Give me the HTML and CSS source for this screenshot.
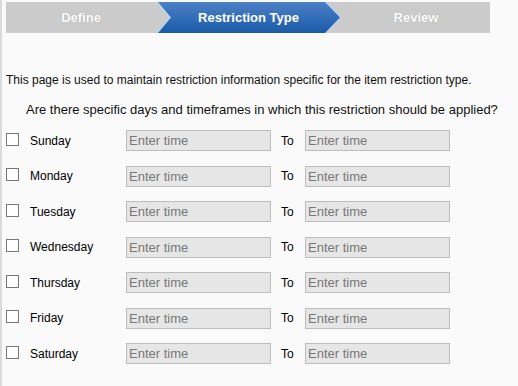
FILE: index.html
```html
<!DOCTYPE html>
<html lang="en">
<head>
    <meta charset="UTF-8">
    <title>Restriction Type</title>
    <link rel="stylesheet" href="styles.css">
</head>
<body>
    <div class="page">
        <div class="wizard">
            <div class="step">Define</div>
            <div class="step step-active"><div class="step-fill">Restriction Type</div></div>
            <div class="step">Review</div>
        </div>

        <p class="intro">This page is used to maintain restriction information specific for the item restriction type.</p>
        <p class="question">Are there specific days and timeframes in which this restriction should be applied?</p>

        <div class="days">
            <div class="day">
                <input type="checkbox" class="day-check" id="d1"><label class="day-name" for="d1">Sunday</label>
                <input type="text" class="time" placeholder="Enter time"><span class="to">To</span><input type="text" class="time" placeholder="Enter time">
            </div>
            <div class="day">
                <input type="checkbox" class="day-check" id="d2"><label class="day-name" for="d2">Monday</label>
                <input type="text" class="time" placeholder="Enter time"><span class="to">To</span><input type="text" class="time" placeholder="Enter time">
            </div>
            <div class="day">
                <input type="checkbox" class="day-check" id="d3"><label class="day-name" for="d3">Tuesday</label>
                <input type="text" class="time" placeholder="Enter time"><span class="to">To</span><input type="text" class="time" placeholder="Enter time">
            </div>
            <div class="day">
                <input type="checkbox" class="day-check" id="d4"><label class="day-name" for="d4">Wednesday</label>
                <input type="text" class="time" placeholder="Enter time"><span class="to">To</span><input type="text" class="time" placeholder="Enter time">
            </div>
            <div class="day">
                <input type="checkbox" class="day-check" id="d5"><label class="day-name" for="d5">Thursday</label>
                <input type="text" class="time" placeholder="Enter time"><span class="to">To</span><input type="text" class="time" placeholder="Enter time">
            </div>
            <div class="day">
                <input type="checkbox" class="day-check" id="d6"><label class="day-name" for="d6">Friday</label>
                <input type="text" class="time" placeholder="Enter time"><span class="to">To</span><input type="text" class="time" placeholder="Enter time">
            </div>
            <div class="day">
                <input type="checkbox" class="day-check" id="d7"><label class="day-name" for="d7">Saturday</label>
                <input type="text" class="time" placeholder="Enter time"><span class="to">To</span><input type="text" class="time" placeholder="Enter time">
            </div>
        </div>
    </div>
</body>
</html>
```

FILE: styles.css
```css
* {margin: 0;padding: 0;box-sizing: border-box;}

html, body {
    height: 100%;
}
body {
    background-color: #fafafa;
    border-left: 2px solid #dadada;
    font-family: "Liberation Sans", Arial, sans-serif;
    color: #111;
}
.page {
    padding: 2px 0 0 4px;
}

/* wizard steps */
.wizard {
    display: flex;
    width: 484px;
    height: 31px;
    background-color: #cbcbcb;
}
.step {
    display: flex;
    align-items: center;
    justify-content: center;
    font-size: 13px;
    font-weight: bold;
    color: #fff;
    text-shadow: 0 0 1px #999;
}
.step:first-child {
    flex: 0 0 150px;
}
.step:last-child {
    flex: 1;
}
.step-active {
    flex: 0 0 186px;
    align-items: stretch;
    background-color: #bcd4ef;
    clip-path: polygon(0 0, calc(100% - 15px) 0, 100% 50%, calc(100% - 15px) 100%, 0 100%, 13px 50%);
}
.step-fill {
    flex: 1;
    display: flex;
    align-items: center;
    justify-content: center;
    padding: 0 15px 0 14px;
    background: linear-gradient(#4c80c6, #1a5ba8);
    text-shadow: none;
    clip-path: polygon(2px 0, calc(100% - 17px) 0, calc(100% - 2px) 50%, calc(100% - 17px) 100%, 2px 100%, 15px 50%);
}

/* texts */
.intro {
    margin-top: 40px;
    font-size: 12px;
    line-height: 14px;
}
.question {
    margin-top: 15px;
    padding-left: 20px;
    font-size: 13px;
    line-height: 16px;
    white-space: nowrap;
}

/* day rows */
.days {
    margin-top: 12px;
    display: flex;
    flex-direction: column;
    gap: 14.5px;
}
.day {
    display: flex;
    align-items: center;
    height: 21px;
}
.day-check {
    appearance: none;
    -webkit-appearance: none;
    width: 13px;
    height: 13px;
    border: 1px solid #777;
    background-color: #fff;
    margin: -3px 11px 0 0;
}
.day-name {
    width: 96px;
    font-size: 12px;
    color: #000;
}
.time {
    width: 145px;
    height: 21px;
    padding: 0 2px;
    border: 1px solid #bcbcbc;
    background-color: #e6e6e6;
    font-family: "Liberation Sans", Arial, sans-serif;
    font-size: 13px;
    outline: none;
}
.time::placeholder {
    color: #777;
}
.to {
    width: 34px;
    padding-left: 10px;
    font-size: 12px;
    color: #000;
}
```
